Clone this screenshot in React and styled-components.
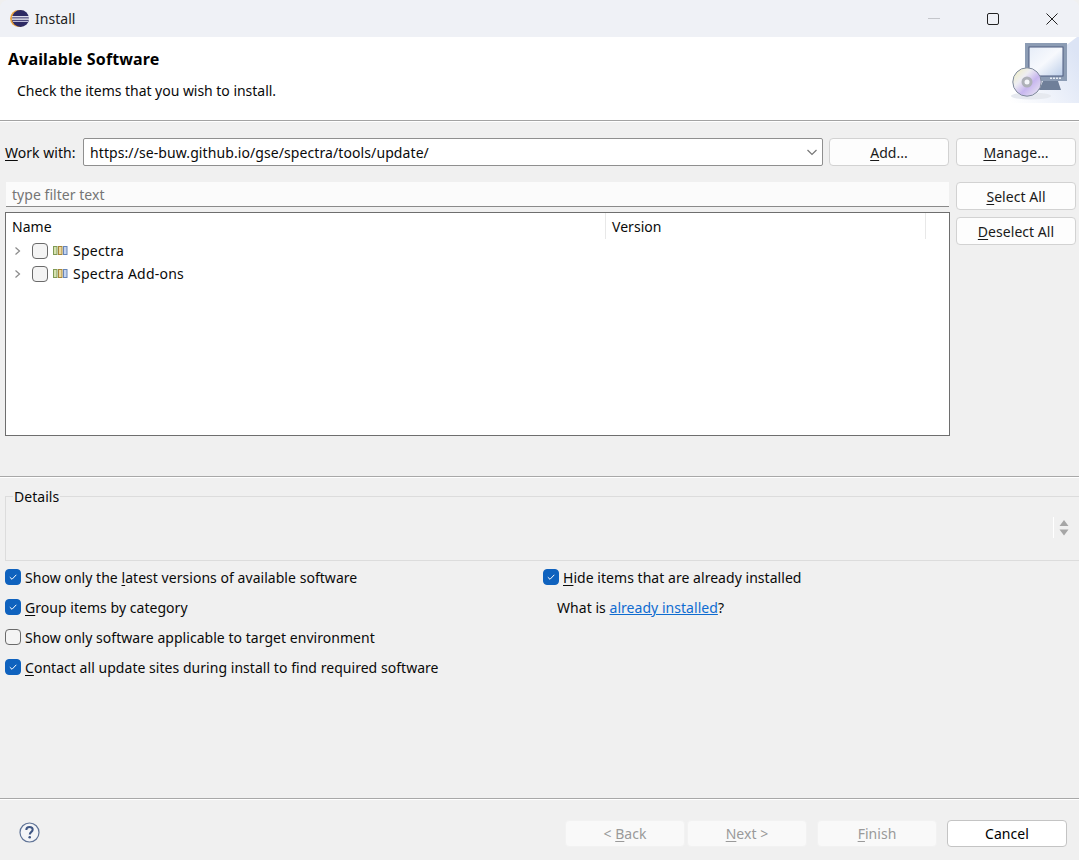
import React from "react";
import styled, { createGlobalStyle, css } from "styled-components";

const GlobalStyle = createGlobalStyle`
  html, body {
    margin: 0;
    padding: 0;
    background: #f0f0f0;
  }
  * {
    box-sizing: border-box;
  }
`;

const Window = styled.div`
  width: 1079px;
  height: 860px;
  display: flex;
  flex-direction: column;
  background: #f0f0f0;
  color: #0a0a0a;
  font-family: "Noto Sans", "Open Sans", sans-serif;
  font-size: 14px;
  letter-spacing: 0.04px;
  overflow: hidden;
`;

const TitleBar = styled.div`
  height: 37px;
  flex: none;
  display: flex;
  align-items: center;
  padding-left: 10px;
  background: #eff1f6;
  border-top-left-radius: 8px;
  border-top-right-radius: 8px;
`;

const TitleText = styled.span`
  margin-left: 6px;
  color: #222;
`;

const WindowControls = styled.div`
  margin-left: auto;
  margin-right: -2px;
  display: flex;
  align-items: center;
  height: 100%;
`;

const ControlButton = styled.div`
  width: 59px;
  height: 100%;
  display: flex;
  align-items: center;
  justify-content: center;
`;

const Banner = styled.div`
  height: 84px;
  flex: none;
  display: flex;
  justify-content: space-between;
  background: #fff;
  border-bottom: 1px solid #a3a3a3;
`;

const BannerText = styled.div`
  padding: 11px 0 0 8px;
`;

const BannerTitle = styled.div`
  font-size: 16px;
  font-weight: 700;
  letter-spacing: 0.13px;
  line-height: 22px;
  color: #000;
`;

const BannerHint = styled.div`
  margin: 11px 0 0 9px;
  line-height: 20px;
  letter-spacing: -0.03px;
`;

const Body = styled.div`
  flex: 1;
  display: flex;
  flex-direction: column;
  border-top: 1px solid #fff;
  padding-top: 16px;
  min-height: 0;
`;

const WorkRow = styled.div`
  display: flex;
  align-items: center;
  height: 28px;
  padding-left: 5px;
`;

const WorkLabel = styled.label`
  width: 78px;
  flex: none;
`;

const Combo = styled.div`
  width: 740px;
  height: 28px;
  flex: none;
  display: flex;
  align-items: center;
  justify-content: space-between;
  padding: 0 3px 0 6px;
  background: #fff;
  border: 1px solid #8f8f8f;
  border-radius: 2px;
  letter-spacing: 0.09px;
`;

const Button = styled.button`
  width: 120px;
  height: 28px;
  flex: none;
  padding: 0;
  font: inherit;
  letter-spacing: inherit;
  background: #fdfdfd;
  border: 1px solid #d2d2d2;
  border-radius: 4px;
  color: #1a1a1a;
  ${(p) =>
    p.disabled &&
    css`
      background: #f9f9f9;
      border-color: #f2f2f2;
      color: #9a9a9a;
    `}
  ${(p) =>
    p.$primary &&
    css`
      background: #fff;
      border-color: #c4c4c4;
      color: #000;
    `}
`;

const AddButton = styled(Button)`
  margin-left: 6px;
`;

const ManageButton = styled(Button)`
  margin-left: 7px;
`;

const TreeArea = styled.div`
  margin-top: 16px;
  display: flex;
  padding-left: 5px;
`;

const TreeColumn = styled.div`
  width: 945px;
  flex: none;
`;

const FilterInput = styled.div`
  height: 25px;
  margin-left: 1px;
  margin-right: 1px;
  display: flex;
  align-items: center;
  padding-left: 6px;
  background: #fbfbfb;
  border-bottom: 1px solid #8a8a8a;
  color: #757575;
`;

const Tree = styled.div`
  height: 224px;
  margin-top: 5px;
  background: #fff;
  border: 1px solid #6e6e6e;
`;

const TreeHeader = styled.div`
  display: flex;
  height: 26px;
  align-items: center;
`;

const HeaderCell = styled.div`
  width: ${(p) => p.$width}px;
  height: 100%;
  display: flex;
  align-items: center;
  padding-left: 6px;
  border-right: 1px solid #e8e8e8;
`;

const TreeRow = styled.div`
  height: 23px;
  display: flex;
  align-items: center;
  padding-left: 8px;
`;

const TreeCheck = styled.span`
  width: 16px;
  height: 16px;
  margin-left: 10px;
  flex: none;
  background: #f4f4f4;
  border: 1px solid #6a6a6a;
  border-radius: 4px;
`;

const RowLabel = styled.span`
  margin-left: 5px;
  letter-spacing: 0.24px;
`;

const SideButtons = styled.div`
  margin-left: 6px;
  display: flex;
  flex-direction: column;
  gap: 7px;
`;

const Separator = styled.div`
  height: 2px;
  flex: none;
  margin-top: 40px;
  border-top: 1px solid #a8a8a8;
  border-bottom: 1px solid #fff;
`;

const Details = styled.fieldset`
  height: 74px;
  margin: 9px 0 0 5px;
  padding: 0 9px 0 7px;
  display: flex;
  align-items: flex-start;
  justify-content: flex-end;
  border: 1px solid #dcdcdc;
  border-right: none;
  min-width: 0;
`;

const DetailsLegend = styled.legend`
  padding: 0 1px;
  margin-left: 0;
  line-height: 19px;
`;

const Spinner = styled.div`
  width: 17px;
  height: 21px;
  margin-top: 11px;
  padding-right: 1px;
  display: flex;
  align-items: center;
  justify-content: flex-end;
  border-left: 1px solid #fff;
`;

const Options = styled.div`
  margin-top: 1px;
  padding-left: 5px;
  display: grid;
  grid-template-columns: 538px 1fr;
  grid-auto-rows: 30px;
`;

const OptionRow = styled.label`
  display: flex;
  align-items: center;
  gap: 4px;
`;

const CheckBox = styled.span`
  width: 16px;
  height: 16px;
  flex: none;
  display: flex;
  align-items: center;
  justify-content: center;
  border-radius: 4px;
  background: ${(p) => (p.$checked ? "#0f62be" : "#f4f4f4")};
  border: 1px solid ${(p) => (p.$checked ? "#0f62be" : "#6a6a6a")};
`;

const InfoLine = styled.div`
  display: flex;
  align-items: center;
  padding-left: 14px;
  white-space: pre;
`;

const Link = styled.a`
  color: #0f6cd0;
  text-decoration: underline;
`;

const FooterSeparator = styled(Separator)`
  margin-top: auto;
`;

const Footer = styled.div`
  height: 60px;
  flex: none;
  display: flex;
  align-items: flex-start;
  padding: 20px 12px 0 19px;
`;

const HelpButton = styled.div`
  width: 21px;
  height: 21px;
  margin-top: 2px;
`;

const FooterButtons = styled.div`
  margin-left: auto;
  display: flex;
`;

const NavButton = styled(Button)`
  height: 27px;
  margin-left: ${(p) => p.$gap}px;
`;

const Mn = styled.span`
  text-decoration: underline;
  text-underline-offset: 2px;
  text-decoration-thickness: 1px;
`;

const EclipseLogo = () => (
  <svg width="19" height="19" viewBox="0 0 19 19">
    <circle cx="8.600" cy="9.500" r="8.500" fill="#e9a23f" />
    <circle cx="10.500" cy="9.500" r="8.500" fill="#2d2a63" />
    <rect x="2" y="7" width="17" height="1.400" fill="#dcdcea" />
    <rect x="2" y="9.400" width="17" height="1.400" fill="#f2f2f8" />
    <rect x="3" y="11.800" width="15" height="1.200" fill="#b9b8d4" />
  </svg>
);

const BannerGraphic = () => (
  <svg width="72" height="66" viewBox="0 0 72 66">
    <defs>
      <linearGradient id="bg" x1="0" y1="0.900" x2="1" y2="0.300">
        <stop offset="0" stopColor="#ffffff" />
        <stop offset="1" stopColor="#dce4f5" />
      </linearGradient>
      <linearGradient id="screen" x1="0" y1="0" x2="1" y2="1">
        <stop offset="0" stopColor="#e6edf8" />
        <stop offset="0.5" stopColor="#f7f9fd" />
        <stop offset="1" stopColor="#bccee9" />
      </linearGradient>
      <linearGradient id="disc" x1="0" y1="0" x2="1" y2="1">
        <stop offset="0" stopColor="#f0eeb8" />
        <stop offset="0.350" stopColor="#eeeef2" />
        <stop offset="0.600" stopColor="#c7b6ef" />
        <stop offset="1" stopColor="#f0f0f2" />
      </linearGradient>
    </defs>
    <path d="M0 66 Q34 26 70 0 H72 V66 Z" fill="url(#bg)" />
    <rect x="18" y="6" width="42" height="38" fill="#8c9cb4" />
    <rect x="22" y="10" width="34" height="29" fill="url(#screen)" stroke="#4f5d80" strokeWidth="1" />
    <path d="M36 44 H51 L54 53 H32 Z" fill="#6f7f99" />
    <rect x="43" y="40.500" width="2" height="1.500" fill="#e8edf5" />
    <rect x="46" y="40.500" width="2" height="1.500" fill="#e8edf5" />
    <rect x="49" y="40.500" width="2" height="1.500" fill="#e8edf5" />
    <rect x="52" y="40.500" width="2" height="1.500" fill="#e8edf5" />
    <ellipse cx="24" cy="59" rx="20" ry="3.500" fill="#e6e9ef" />
    <circle cx="20" cy="45" r="14.200" fill="url(#disc)" stroke="#7f8a9c" strokeWidth="1" />
    <circle cx="20" cy="45" r="5.500" fill="#aeb1b8" />
    <circle cx="20" cy="45" r="2.500" fill="#f4f6fa" />
  </svg>
);

const Chevron = ({ color = "#777" }) => (
  <svg width="14" height="14" viewBox="0 0 14 14">
    <path d="M2.500 5 L7 9.500 L11.500 5" fill="none" stroke={color} strokeWidth="1.200" />
  </svg>
);

const TreeArrow = () => (
  <svg width="8" height="10" viewBox="0 0 8 10">
    <path d="M1.500 1.500 L5.500 5 L1.500 8.500" fill="none" stroke="#8a8a8a" strokeWidth="1.200" />
  </svg>
);

const CategoryIcon = () => (
  <svg width="15" height="10" viewBox="0 0 15 10" style={{ marginLeft: 5 }}>
    <rect x="0.500" y="0.500" width="3.500" height="8" fill="#d5e2b0" stroke="#7f9a55" />
    <rect x="5.500" y="0.500" width="3.500" height="8" fill="#ecd9a0" stroke="#a58638" />
    <rect x="10.500" y="0.500" width="3.500" height="8" fill="#c3d3ee" stroke="#6584b8" />
  </svg>
);

const CheckMark = () => (
  <svg width="10" height="10" viewBox="0 0 10 10">
    <path d="M1.800 5.200 L4 7.300 L8.300 2.800" fill="none" stroke="#fff" strokeWidth="1" />
  </svg>
);

const HelpIcon = () => (
  <svg width="21" height="21" viewBox="0 0 21 21">
    <circle cx="10.500" cy="10.500" r="9.500" fill="#f4f5f7" stroke="#5f7396" strokeWidth="1.200" />
    <path
      d="M7.300 8 C7.300 5.900 8.800 5 10.500 5 C12.300 5 13.700 6 13.700 7.700 C13.700 9.800 10.800 10 10.800 12.500"
      fill="none"
      stroke="#3f5683"
      strokeWidth="2"
    />
    <circle cx="10.700" cy="15.300" r="1.300" fill="#3f5683" />
  </svg>
);

const Option = ({ checked, children }) => (
  <OptionRow>
    <CheckBox $checked={checked}>{checked && <CheckMark />}</CheckBox>
    <span>{children}</span>
  </OptionRow>
);

const rows = ["Spectra", "Spectra Add-ons"];

const App = () => {
  return (
    <Window>
      <GlobalStyle />
      <TitleBar>
        <EclipseLogo />
        <TitleText>Install</TitleText>
        <WindowControls>
          <ControlButton>
            <svg width="12" height="2" viewBox="0 0 12 2">
              <rect width="12" height="1" fill="#c4c6cb" />
            </svg>
          </ControlButton>
          <ControlButton>
            <svg width="12" height="12" viewBox="0 0 12 12">
              <rect x="0.500" y="0.500" width="11" height="11" rx="1.500" fill="none" stroke="#222" />
            </svg>
          </ControlButton>
          <ControlButton>
            <svg width="12" height="12" viewBox="0 0 12 12">
              <path d="M0.500 0.500 L11.500 11.500 M11.500 0.500 L0.500 11.500" stroke="#222" />
            </svg>
          </ControlButton>
        </WindowControls>
      </TitleBar>

      <Banner>
        <BannerText>
          <BannerTitle>Available Software</BannerTitle>
          <BannerHint>Check the items that you wish to install.</BannerHint>
        </BannerText>
        <BannerGraphic />
      </Banner>

      <Body>
        <WorkRow>
          <WorkLabel>
            <Mn>W</Mn>ork with:
          </WorkLabel>
          <Combo>
            <span>https://se-buw.github.io/gse/spectra/tools/update/</span>
            <Chevron />
          </Combo>
          <AddButton>
            <Mn>A</Mn>dd...
          </AddButton>
          <ManageButton>
            <Mn>M</Mn>anage...
          </ManageButton>
        </WorkRow>

        <TreeArea>
          <TreeColumn>
            <FilterInput>type filter text</FilterInput>
            <Tree>
              <TreeHeader>
                <HeaderCell $width={600}>Name</HeaderCell>
                <HeaderCell $width={320}>Version</HeaderCell>
              </TreeHeader>
              {rows.map((row) => (
                <TreeRow key={row}>
                  <TreeArrow />
                  <TreeCheck />
                  <CategoryIcon />
                  <RowLabel>{row}</RowLabel>
                </TreeRow>
              ))}
            </Tree>
          </TreeColumn>
          <SideButtons>
            <Button>
              <Mn>S</Mn>elect All
            </Button>
            <Button>
              <Mn>D</Mn>eselect All
            </Button>
          </SideButtons>
        </TreeArea>

        <Separator />

        <Details>
          <DetailsLegend>Details</DetailsLegend>
          <Spinner>
            <svg width="10" height="18" viewBox="0 0 10 18">
              <path d="M5 1 L9.500 7 H0.500 Z M0.500 10.500 H9.500 L5 16.500 Z" fill="#a6a6a6" />
            </svg>
          </Spinner>
        </Details>

        <Options>
          <Option checked>
            Show only the <Mn>l</Mn>atest versions of available software
          </Option>
          <Option checked>
            <Mn>H</Mn>ide items that are already installed
          </Option>
          <Option checked>
            <Mn>G</Mn>roup items by category
          </Option>
          <InfoLine>
            What is <Link>already installed</Link>?
          </InfoLine>
          <Option>
            Show only software applicable to target environment
          </Option>
          <span />
          <Option checked>
            <Mn>C</Mn>ontact all update sites during install to find required software
          </Option>
        </Options>

        <FooterSeparator />

        <Footer>
          <HelpButton>
            <HelpIcon />
          </HelpButton>
          <FooterButtons>
            <NavButton disabled $gap={0}>
              {"< "}
              <Mn>B</Mn>ack
            </NavButton>
            <NavButton disabled $gap={2}>
              <Mn>N</Mn>ext {">"}
            </NavButton>
            <NavButton disabled $gap={10}>
              <Mn>F</Mn>inish
            </NavButton>
            <NavButton $primary $gap={10}>
              Cancel
            </NavButton>
          </FooterButtons>
        </Footer>
      </Body>
    </Window>
  );
};

export default App;
